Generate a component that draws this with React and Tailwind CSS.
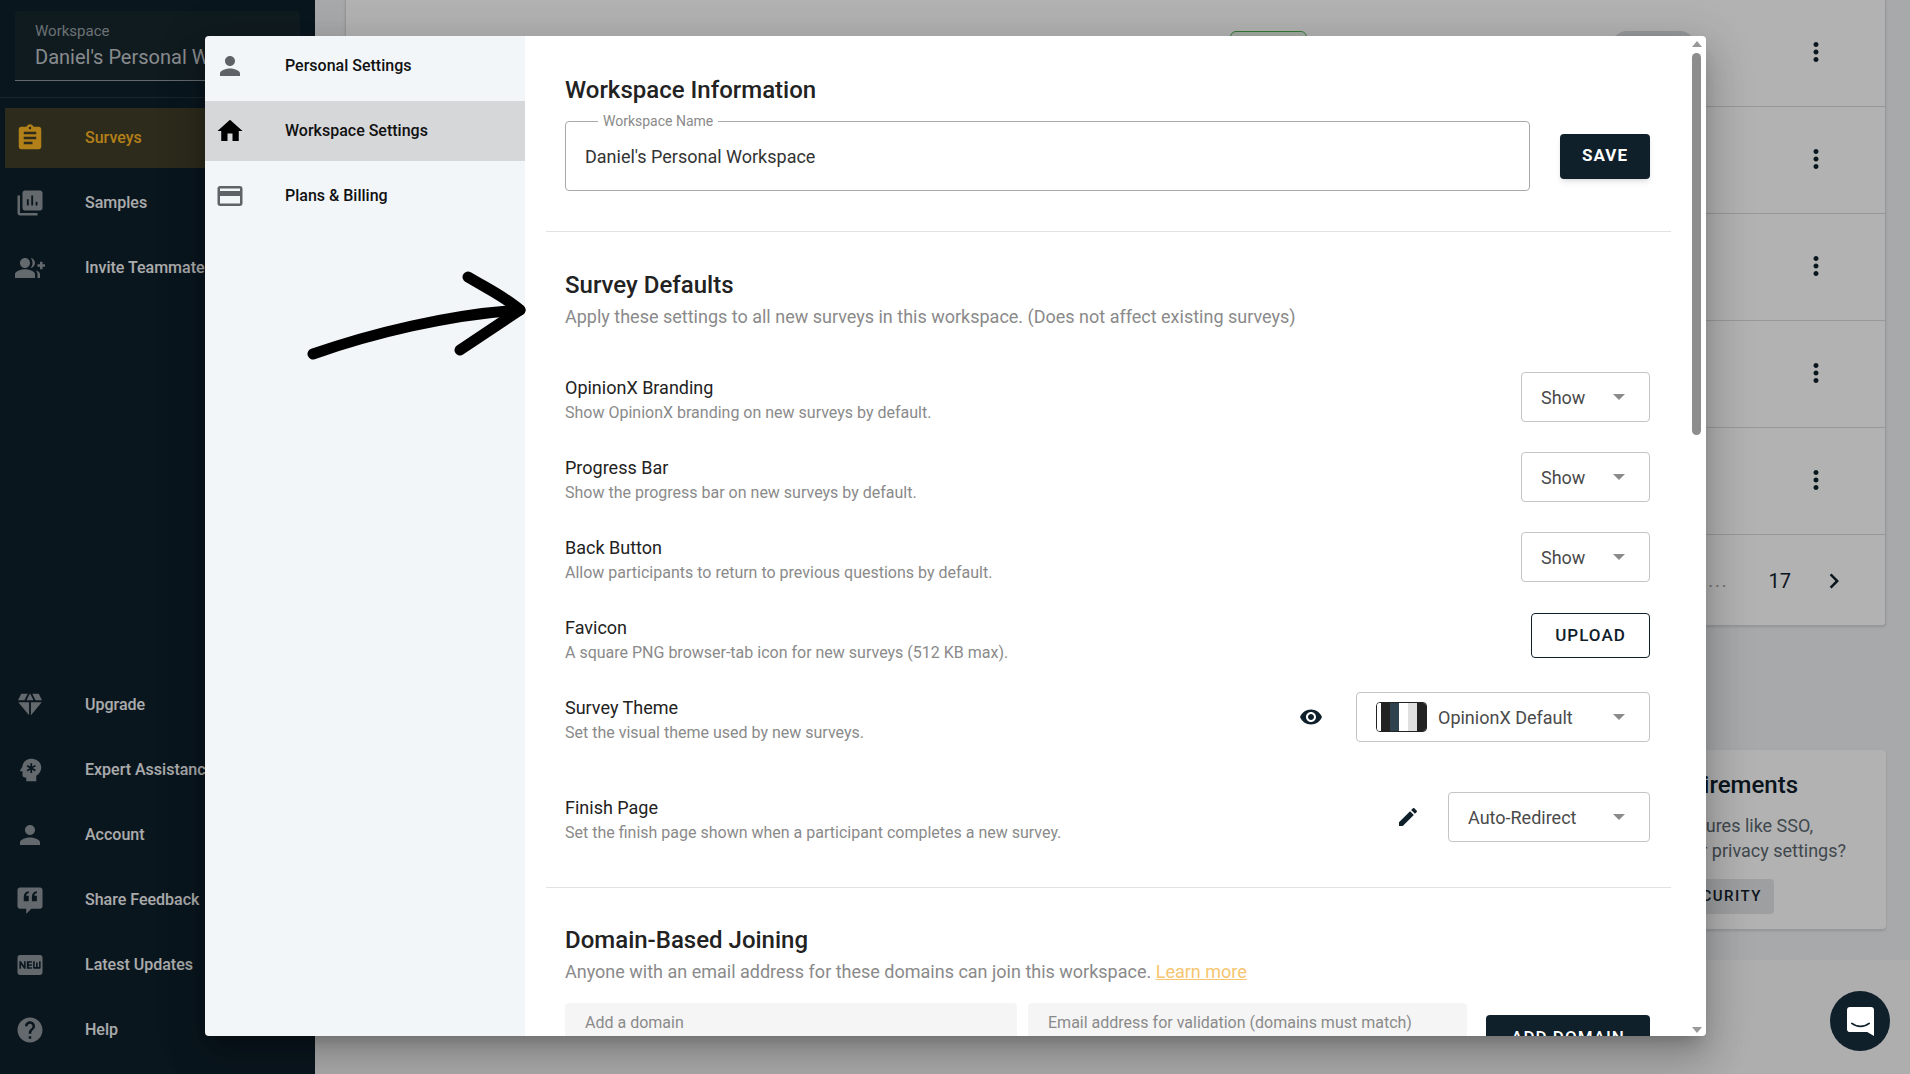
import {
  MdPerson,
  MdHome,
  MdCreditCard,
  MdAssignment,
  MdGroupAdd,
  MdDiamond,
  MdFiberNew,
  MdHelp,
  MdVisibility,
  MdEdit,
  MdMoreVert,
  MdChevronRight,
} from "react-icons/md";

function SamplesIcon({ className }) {
  return (
    <svg viewBox="0 0 24 24" fill="currentColor" className={className}>
      <path d="M4 6H2v14c0 1.1.9 2 2 2h14v-2H4V6z" />
      <path d="M20 2H8c-1.1 0-2 .9-2 2v12c0 1.1.9 2 2 2h12c1.1 0 2-.9 2-2V4c0-1.1-.9-2-2-2zM11 14H9.5V9H11v5zm3.5 0H13V6h1.500v8zm3.500 0h-1.500v-3H18v3z" />
    </svg>
  );
}

function ExpertIcon({ className }) {
  return (
    <svg viewBox="0 0 24 24" fill="currentColor" className={className}>
      <path
        fillRule="evenodd"
        d="M13 3C9.200 3 6.200 5.700 5.900 9.300L4 12.400c-.2.300 0 .6.300.6H6v3c0 1.100.9 2 2 2h1v3h8v-4.500c2.400-1.200 4-3.600 4-6.500 0-4-3.600-7-8-7zm.7 3.500v2.700l2.300-1.300.7 1.200-2.400 1.400 2.400 1.400-.7 1.200-2.300-1.300v2.700h-1.400v-2.700L10 13.100l-.7-1.200 2.400-1.400-2.400-1.400.7-1.200 2.300 1.300V6.500h1.400z"
      />
    </svg>
  );
}

function FeedbackIcon({ className }) {
  return (
    <svg viewBox="0 0 24 24" fill="currentColor" className={className}>
      <path
        fillRule="evenodd"
        d="M4 2h16c1.100 0 2 .9 2 2v13c0 1.100-.9 2-2 2h-7l-4 4v-4H4c-1.100 0-2-.9-2-2V4c0-1.100.9-2 2-2zm3 11h4V8.500H9c0-1 .6-1.700 2-1.900V5C8.400 5.300 7 7 7 9.500V13zm6.500 0h4V8.500h-2c0-1 .6-1.700 2-1.900V5c-2.600.3-4 2-4 4.500V13z"
      />
    </svg>
  );
}

function Caret() {
  return (
    <svg viewBox="0 0 10 5" fill="#8a8a8a" className="w-3 h-[6px] shrink-0">
      <path d="M0 0l5 5 5-5z" />
    </svg>
  );
}

const topNav = [
  { label: "Surveys", icon: MdAssignment, active: true },
  { label: "Samples", icon: SamplesIcon },
  { label: "Invite Teammates", icon: MdGroupAdd },
];

const bottomNav = [
  { label: "Upgrade", icon: MdDiamond },
  { label: "Expert Assistance", icon: ExpertIcon },
  { label: "Account", icon: MdPerson },
  { label: "Share Feedback", icon: FeedbackIcon },
  { label: "Latest Updates", icon: MdFiberNew },
  { label: "Help", icon: MdHelp },
];

function NavRow({ item }) {
  const Icon = item.icon;
  return (
    <div
      className={
        item.active
          ? "flex items-center h-[60px] ml-[5px] bg-[#ffb824]/20 text-[#ffb824]"
          : "flex items-center h-[60px] ml-[5px] text-[#f4f5f7]"
      }
    >
      <div className="w-[50px] flex justify-center shrink-0">
        <Icon className={item.active ? "size-[30px]" : "size-[30px] text-[#8f979c]"} />
      </div>
      <span className="ml-[30px] text-[16px] font-medium whitespace-nowrap">{item.label}</span>
    </div>
  );
}

function Sidebar() {
  return (
    <aside className="w-[315px] shrink-0 h-full bg-[#0f202b] flex flex-col justify-between overflow-hidden">
      <div>
        <div className="px-[15px] pt-[11px] pb-[16px] border-b border-[#26343d]">
          <div className="h-[70px] bg-[#18272f] border-b border-[#8f979c] rounded-t-[4px] pl-[20px] pt-[9px] text-[#c3c8cb] whitespace-nowrap overflow-hidden">
            <div className="text-[15px] leading-[22px] text-[#9aa2a6]">Workspace</div>
            <div className="text-[20px] leading-[30px]">Daniel's Personal Workspace</div>
          </div>
        </div>
        <div className="mt-[10px] flex flex-col gap-[5px]">
          {topNav.map((item) => (
            <NavRow key={item.label} item={item} />
          ))}
        </div>
      </div>
      <div className="mb-[14px] flex flex-col gap-[5px]">
        {bottomNav.map((item) => (
          <NavRow key={item.label} item={item} />
        ))}
      </div>
    </aside>
  );
}

function SurveyRow({ first }) {
  return (
    <div className="flex items-center h-[107px] border-b border-[#d8dadd] pr-[54px] pl-[20px]">
      {first && (
        <>
          <span className="w-[864px] text-[24px] font-medium text-[#0f202b] whitespace-nowrap">
            Randomized Split Branching
          </span>
          <span className="w-[77px] h-[44px] rounded-[6px] border border-[#4caf50] bg-[#e8f5e9]" />
          <span className="ml-[304px] w-[85px] h-[44px] rounded-[16px] bg-[#d8dadd]" />
        </>
      )}
      <MdMoreVert className="ml-auto size-[30px] text-[#0f202b] -mt-[3px]" />
    </div>
  );
}

function Background() {
  return (
    <main className="flex-1 min-w-0 h-full flex flex-col bg-[#f1f2f5]">
      <div className="flex-1 min-h-0 pl-[30px] pr-[24px]">
        <div className="bg-white h-[626px] rounded-b-[4px] border-b border-l border-r border-[#d8dadd] shadow-sm">
          <SurveyRow first />
          <SurveyRow />
          <SurveyRow />
          <SurveyRow />
          <SurveyRow />
          <div className="h-[91px] flex items-center justify-end pr-[36px] text-[#0f202b]">
            <span className="text-[#9a9a9a] text-[18px] tracking-[2px] mr-[40px]">...</span>
            <span className="text-[20px] mr-[28px]">17</span>
            <MdChevronRight className="size-[30px]" />
          </div>
        </div>
        <div className="mt-[124px] bg-white h-[180px] rounded-[4px] border-b border-[#d8dadd] shadow-sm flex flex-col items-end">
          <div className="mt-[17px] mr-[88px] text-[24px] font-medium text-[#0f202b] whitespace-nowrap">
            Security Requirements
          </div>
          <div className="mt-[10px] mr-[73px] text-[18px] leading-[25px] text-[#5c6870] whitespace-nowrap">
            Need features like SSO,
          </div>
          <div className="mr-[40px] text-[18px] leading-[25px] text-[#5c6870] whitespace-nowrap">
            or stricter privacy settings?
          </div>
          <div className="mt-[16px] mr-[112px] h-[35px] px-[12px] flex items-center rounded-[4px] bg-[#e2e4e6] text-[15px] font-medium tracking-[1.500px] text-[#0f202b]">
            SECURITY
          </div>
        </div>
      </div>
      <div className="h-[114px] bg-[#fafafa]" />
    </main>
  );
}

const settingsNav = [
  { label: "Personal Settings", icon: MdPerson, color: "text-[#5f6368]" },
  { label: "Workspace Settings", icon: MdHome, color: "text-black", active: true },
  { label: "Plans & Billing", icon: MdCreditCard, color: "text-[#5f6368]" },
];

function SettingsNav() {
  return (
    <nav className="relative w-[320px] shrink-0 bg-[#f2f6f9] flex flex-col gap-[5px]">
      {settingsNav.map((item) => {
        const Icon = item.icon;
        return (
          <div
            key={item.label}
            className={
              item.active
                ? "flex items-center h-[60px] bg-[#d6d7d9]"
                : "flex items-center h-[60px]"
            }
          >
            <div className="w-[50px] flex justify-center shrink-0">
              <Icon className={"size-[30px] " + item.color} />
            </div>
            <span className="ml-[30px] text-[16px] font-medium text-[#111] whitespace-nowrap">{item.label}</span>
          </div>
        );
      })}
      <svg
        viewBox="0 0 240 100"
        className="absolute left-[100px] top-[231px] w-[240px] h-[100px]"
        fill="none"
        stroke="#000"
        strokeWidth="11"
        strokeLinecap="round"
        strokeLinejoin="round"
      >
        <path d="M8 87C65 67 145 47 215 43" />
        <path d="M163 10C185 23 200 30 215 43L155 83" />
      </svg>
    </nav>
  );
}

function Field({ title, desc, children, className = "" }) {
  return (
    <div className={"flex items-center h-[50px] " + className}>
      <div className="pt-[6px] flex-1">
        <div className="text-[18px] leading-[25px] text-[#222]">{title}</div>
        <div className="text-[16px] leading-[25px] text-[#8a8a8a]">{desc}</div>
      </div>
      {children}
    </div>
  );
}

function Select({ children, className = "w-[129px]" }) {
  return (
    <div className={"h-[50px] border border-[#c4c4c4] rounded-[4px] flex items-center justify-between pl-[19px] pr-[24px] text-[18px] text-[#4a4a4a] " + className}>
      {children}
      <Caret />
    </div>
  );
}

function SettingsContent() {
  return (
    <div className="flex-1 min-w-0 bg-white pl-[40px] pr-[39px] pt-[38px] overflow-hidden">
      <h3 className="text-[24px] leading-[32px] font-medium text-[#222]">Workspace Information</h3>
      <div className="mt-[15px] flex items-center">
        <div className="relative flex-1 h-[70px] border border-[#a8a8a8] rounded-[4px] flex items-center pl-[19px] text-[18px] text-[#333]">
          <span className="absolute -top-[9px] left-[32px] bg-white px-[5px] text-[14px] leading-[16px] text-[#8a8a8a]">
            Workspace Name
          </span>
          Daniel's Personal Workspace
        </div>
        <button className="ml-[30px] w-[90px] h-[45px] rounded-[4px] bg-[#0f202b] text-white text-[17px] font-bold tracking-[1px] shadow-md">
          SAVE
        </button>
      </div>
      <div className="mt-[40px] -ml-[19px] -mr-[21px] border-t border-[#e2e2e2]" />

      <h3 className="mt-[37px] text-[24px] leading-[32px] font-medium text-[#222]">Survey Defaults</h3>
      <p className="mt-[4px] text-[18px] leading-[24px] text-[#8a8a8a]">
        Apply these settings to all new surveys in this workspace. (Does not affect existing surveys)
      </p>

      <div className="mt-[43px] flex flex-col gap-[30px]">
        <Field title="OpinionX Branding" desc="Show OpinionX branding on new surveys by default.">
          <Select>Show</Select>
        </Field>
        <Field title="Progress Bar" desc="Show the progress bar on new surveys by default.">
          <Select>Show</Select>
        </Field>
        <Field title="Back Button" desc="Allow participants to return to previous questions by default.">
          <Select>Show</Select>
        </Field>
        <Field title="Favicon" desc="A square PNG browser-tab icon for new surveys (512 KB max).">
          <button className="w-[119px] h-[45px] -mt-[3px] rounded-[4px] border border-[#0f202b] text-[#0f202b] text-[17px] font-medium tracking-[1px]">
            UPLOAD
          </button>
        </Field>
        <Field title="Survey Theme" desc="Set the visual theme used by new surveys.">
          <MdVisibility className="size-[24px] text-[#0f202b] mr-[33px]" />
          <Select className="w-[294px]">
            <div className="flex items-center gap-[11px]">
              <div className="flex w-[51px] h-[30px] rounded-[4px] border border-[#222] overflow-hidden">
                <span className="flex-[1] bg-white" />
                <span className="flex-[2] bg-[#222]" />
                <span className="flex-[2] bg-[#2e434e]" />
                <span className="flex-[2] bg-white" />
                <span className="flex-[2] bg-[#e0e0e0]" />
                <span className="flex-[2] bg-[#222]" />
              </div>
              OpinionX Default
            </div>
          </Select>
        </Field>
        <Field title="Finish Page" desc="Set the finish page shown when a participant completes a new survey." className="mt-[20px]">
          <MdEdit className="size-[24px] text-[#0f202b] mr-[28px]" />
          <Select className="w-[202px]">Auto-Redirect</Select>
        </Field>
      </div>
      <div className="mt-[45px] -ml-[19px] -mr-[21px] border-t border-[#e2e2e2]" />

      <h3 className="mt-[36px] text-[24px] leading-[32px] font-medium text-[#222]">Domain-Based Joining</h3>
      <p className="mt-[4px] text-[18px] leading-[24px] text-[#8a8a8a]">
        Anyone with an email address for these domains can join this workspace.{" "}
        <span className="text-[#f6c56f] underline">Learn more</span>
      </p>
      <div className="mt-[19px] flex items-start">
        <div className="w-[452px] h-[60px] bg-[#f5f5f5] rounded-t-[4px] pl-[20px] pt-[10px] text-[16px] leading-[20px] text-[#8a8a8a]">
          Add a domain
        </div>
        <div className="ml-[11px] w-[439px] h-[60px] bg-[#f5f5f5] rounded-t-[4px] pl-[20px] pt-[10px] text-[16px] leading-[20px] text-[#8a8a8a]">
          Email address for validation (domains must match)
        </div>
        <button className="ml-auto mt-[12px] w-[164px] h-[45px] rounded-[4px] bg-[#0f202b] text-white text-[17px] font-medium tracking-[1px]">
          ADD DOMAIN
        </button>
      </div>
    </div>
  );
}

function Scrollbar() {
  return (
    <div className="w-[17px] shrink-0 bg-white flex flex-col items-center pt-[5px] pr-[2px] pb-[3px]">
      <div className="w-0 h-0 border-x-[5px] border-x-transparent border-b-[6px] border-b-[#9a9a9a]" />
      <div className="mt-[6px] w-[9px] h-[382px] rounded-full bg-[#8d8d8d]" />
      <div className="mt-auto w-0 h-0 border-x-[5px] border-x-transparent border-t-[6px] border-t-[#9a9a9a]" />
    </div>
  );
}

function IntercomButton() {
  return (
    <div className="absolute left-[1830px] top-[991px] size-[60px] rounded-full bg-[#0f202b] flex items-center justify-center">
      <svg viewBox="0 0 28 30" className="w-[27px] h-[29px]">
        <path
          fill="#fff"
          d="M3 0h22c1.700 0 3 1.300 3 3v27l-7-4H3c-1.700 0-3-1.300-3-3V3c0-1.700 1.300-3 3-3z"
        />
        <path d="M5 17c5 4 13 4 18 0" fill="none" stroke="#0f202b" strokeWidth="1.800" strokeLinecap="round" />
      </svg>
    </div>
  );
}

export default function App() {
  return (
    <div className="relative w-[1910px] h-[1074px] overflow-hidden flex font-[Roboto,sans-serif]">
      <Sidebar />
      <Background />
      <div className="absolute inset-0 bg-black/30" />
      <div className="absolute left-[205px] top-[36px] w-[1501px] h-[1000px] flex rounded-[4px] overflow-hidden shadow-[0_11px_15px_-7px_rgba(0,0,0,0.2),0_24px_38px_3px_rgba(0,0,0,0.14),0_9px_46px_8px_rgba(0,0,0,0.12)]">
        <SettingsNav />
        <SettingsContent />
        <Scrollbar />
      </div>
      <IntercomButton />
    </div>
  );
}
